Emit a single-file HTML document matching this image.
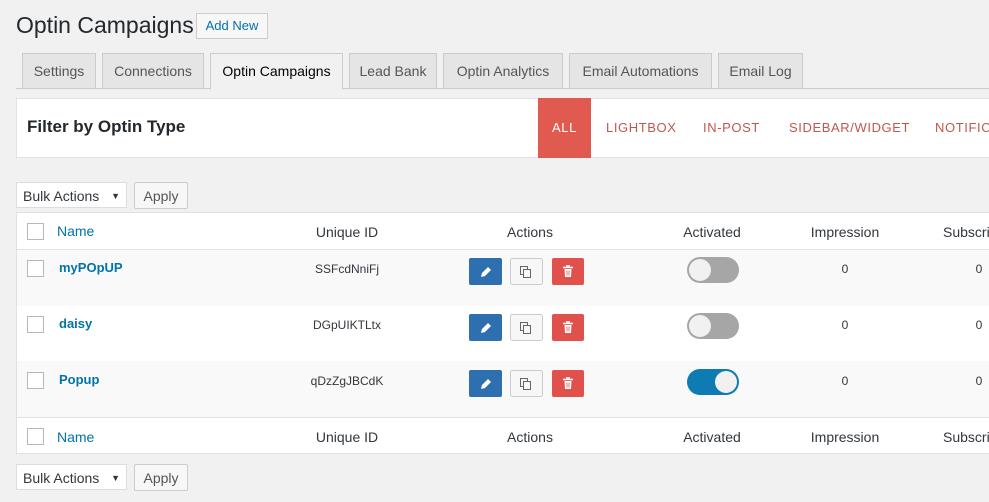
<!DOCTYPE html><html><head><style>
body{margin:0;width:989px;height:502px;background:#f1f1f1;font-family:"Liberation Sans",sans-serif;overflow:hidden;position:relative;color:#23282d}
.a{position:absolute}
.tab{position:absolute;top:53px;height:34px;border:1px solid #ccc;background:#e5e5e5;color:#555;font-size:14px;line-height:34px;text-align:center}
.tab.on{background:#f1f1f1;color:#000;border-bottom-color:#f1f1f1;height:35px}
.ft{position:absolute;top:98px;height:59px;line-height:59px;font-size:13px;color:#c0574e;letter-spacing:0.6px}
.sel{position:absolute;left:16px;width:111px;height:26px;border:1px solid #ddd;background:#fff;font-size:14px;line-height:26px;padding-left:6px;box-sizing:border-box;color:#32373c}
.ap{position:absolute;left:134px;width:54px;height:27px;border:1px solid #ccc;background:#f7f7f7;font-size:14px;line-height:26px;text-align:center;color:#555;box-sizing:border-box;border-radius:2px}
.row{position:absolute;left:17px;width:972px}
.cb{position:absolute;left:11px;width:15px;height:15px;border:1px solid #b4b9be;background:#fff}
.t{position:absolute;font-size:14px;color:#32373c}
.nm{position:absolute;left:59px;font-size:13px;color:#0073aa;font-weight:bold}
.c{position:absolute;font-size:13px;color:#32373c;transform:translateX(-50%)}
</style></head><body>
<div class="a" style="left:16px;top:12px;font-size:23px;color:#23282d">Optin Campaigns</div>
<div class="a" style="left:196px;top:13px;width:70px;height:24px;border:1px solid #ccc;background:#f7f7f7;color:#0073aa;font-size:13px;line-height:24px;text-align:center">Add New</div>
<div class="a" style="left:16px;top:88px;width:973px;height:1px;background:#ccc"></div>
<div class="tab" style="left:22px;width:72px">Settings</div>
<div class="tab" style="left:102px;width:100px">Connections</div>
<div class="tab on" style="left:210px;width:131px">Optin Campaigns</div>
<div class="tab" style="left:349px;width:86px">Lead Bank</div>
<div class="tab" style="left:443px;width:118px">Optin Analytics</div>
<div class="tab" style="left:569px;width:141px">Email Automations</div>
<div class="tab" style="left:718px;width:83px">Email Log</div>
<div class="a" style="left:16px;top:98px;width:975px;height:58px;background:#fff;border:1px solid #e2e2e2"></div>
<div class="a" style="left:27px;top:117px;font-size:17px;font-weight:bold;color:#23282d">Filter by Optin Type</div>
<div class="a" style="left:538px;top:98px;width:53px;height:60px;background:#e05a4f"></div>
<div class="ft" style="left:552px;color:#fff">ALL</div>
<div class="ft" style="left:606px">LIGHTBOX</div>
<div class="ft" style="left:703px">IN-POST</div>
<div class="ft" style="left:789px">SIDEBAR/WIDGET</div>
<div class="ft" style="left:935px">NOTIFIC</div>
<div class="sel" style="top:182px">Bulk Actions<span style="position:absolute;right:6px;font-size:9px">▼</span></div>
<div class="ap" style="top:182px">Apply</div>
<div class="a" style="left:16px;top:212px;width:975px;height:240px;background:#fff;border:1px solid #e1e1e1"></div>
<div class="row" style="top:249px;height:56px;background:#f9f9f9;border-top:1px solid #e1e1e1"></div>
<div class="row" style="top:361px;height:56px;background:#f9f9f9"></div>
<div class="row" style="top:417px;height:1px;background:#e1e1e1"></div>
<div class="cb" style="top:223px;left:27px"></div>
<div class="t" style="left:57px;top:223px;color:#0073aa">Name</div>
<div class="c" style="left:347px;top:224px;font-size:14px">Unique ID</div>
<div class="c" style="left:530px;top:224px;font-size:14px">Actions</div>
<div class="c" style="left:712px;top:224px;font-size:14px">Activated</div>
<div class="c" style="left:845px;top:224px;font-size:14px">Impression</div>
<div class="t" style="left:943px;top:224px">Subscri</div>
<div class="cb" style="top:428px;left:27px"></div>
<div class="t" style="left:57px;top:429px;color:#0073aa">Name</div>
<div class="c" style="left:347px;top:429px;font-size:14px">Unique ID</div>
<div class="c" style="left:530px;top:429px;font-size:14px">Actions</div>
<div class="c" style="left:712px;top:429px;font-size:14px">Activated</div>
<div class="c" style="left:845px;top:429px;font-size:14px">Impression</div>
<div class="t" style="left:943px;top:429px">Subscri</div>
<div class="cb" style="top:260px;left:27px"></div><div class="nm" style="top:260px">myPOpUP</div><div class="c" style="left:347px;top:262px;font-size:12px">SSFcdNniFj</div>
<div class="cb" style="top:316px;left:27px"></div><div class="nm" style="top:316px">daisy</div><div class="c" style="left:347px;top:318px;font-size:12px">DGpUIKTLtx</div>
<div class="cb" style="top:372px;left:27px"></div><div class="nm" style="top:372px">Popup</div><div class="c" style="left:347px;top:374px;font-size:12px">qDzZgJBCdK</div>
<div class="c" style="left:845px;top:262px;font-size:12px">0</div><div class="c" style="left:979px;top:262px;font-size:12px">0</div>
<div class="c" style="left:845px;top:318px;font-size:12px">0</div><div class="c" style="left:979px;top:318px;font-size:12px">0</div>
<div class="c" style="left:845px;top:374px;font-size:12px">0</div><div class="c" style="left:979px;top:374px;font-size:12px">0</div>
<svg class="a" style="left:0;top:0" width="989" height="502">
<g id="b">
<rect x="469" y="258" width="33" height="27" rx="2" fill="#2e6fb0"/>
<path d="M481 277l1-4 6-6 3 3-6 6z" fill="#fff"/>
<rect x="510.5" y="258.5" width="32" height="26" rx="2" fill="#f7f7f7" stroke="#ccc"/>
<rect x="520.5" y="266.5" width="7" height="8" fill="none" stroke="#666"/><rect x="523.5" y="269.5" width="7" height="8" fill="#f7f7f7" stroke="#666"/>
<rect x="552" y="258" width="32" height="27" rx="2" fill="#e0514c"/>
<path d="M563 267.5h10M566 266h4" stroke="#fff" stroke-width="1.5"/>
<path d="M564.5 269h7l-.5 8h-6z" fill="#fff"/>
<path d="M567 270.5v5M569 270.5v5" stroke="#e0514c" stroke-width="0.8"/>
</g>
<use href="#b" y="56"/><use href="#b" y="112"/>
<rect x="687" y="257" width="52" height="26" rx="13" fill="#a6a6a6"/><circle cx="700" cy="270" r="11" fill="#f1f1f1"/>
<rect x="687" y="313" width="52" height="26" rx="13" fill="#a6a6a6"/><circle cx="700" cy="326" r="11" fill="#f1f1f1"/>
<rect x="687" y="369" width="52" height="26" rx="13" fill="#0e7bb3"/><circle cx="726" cy="382" r="11" fill="#f1f1f1"/>
</svg>
<div class="sel" style="top:464px">Bulk Actions<span style="position:absolute;right:6px;font-size:9px">▼</span></div>
<div class="ap" style="top:464px">Apply</div>
</body></html>
